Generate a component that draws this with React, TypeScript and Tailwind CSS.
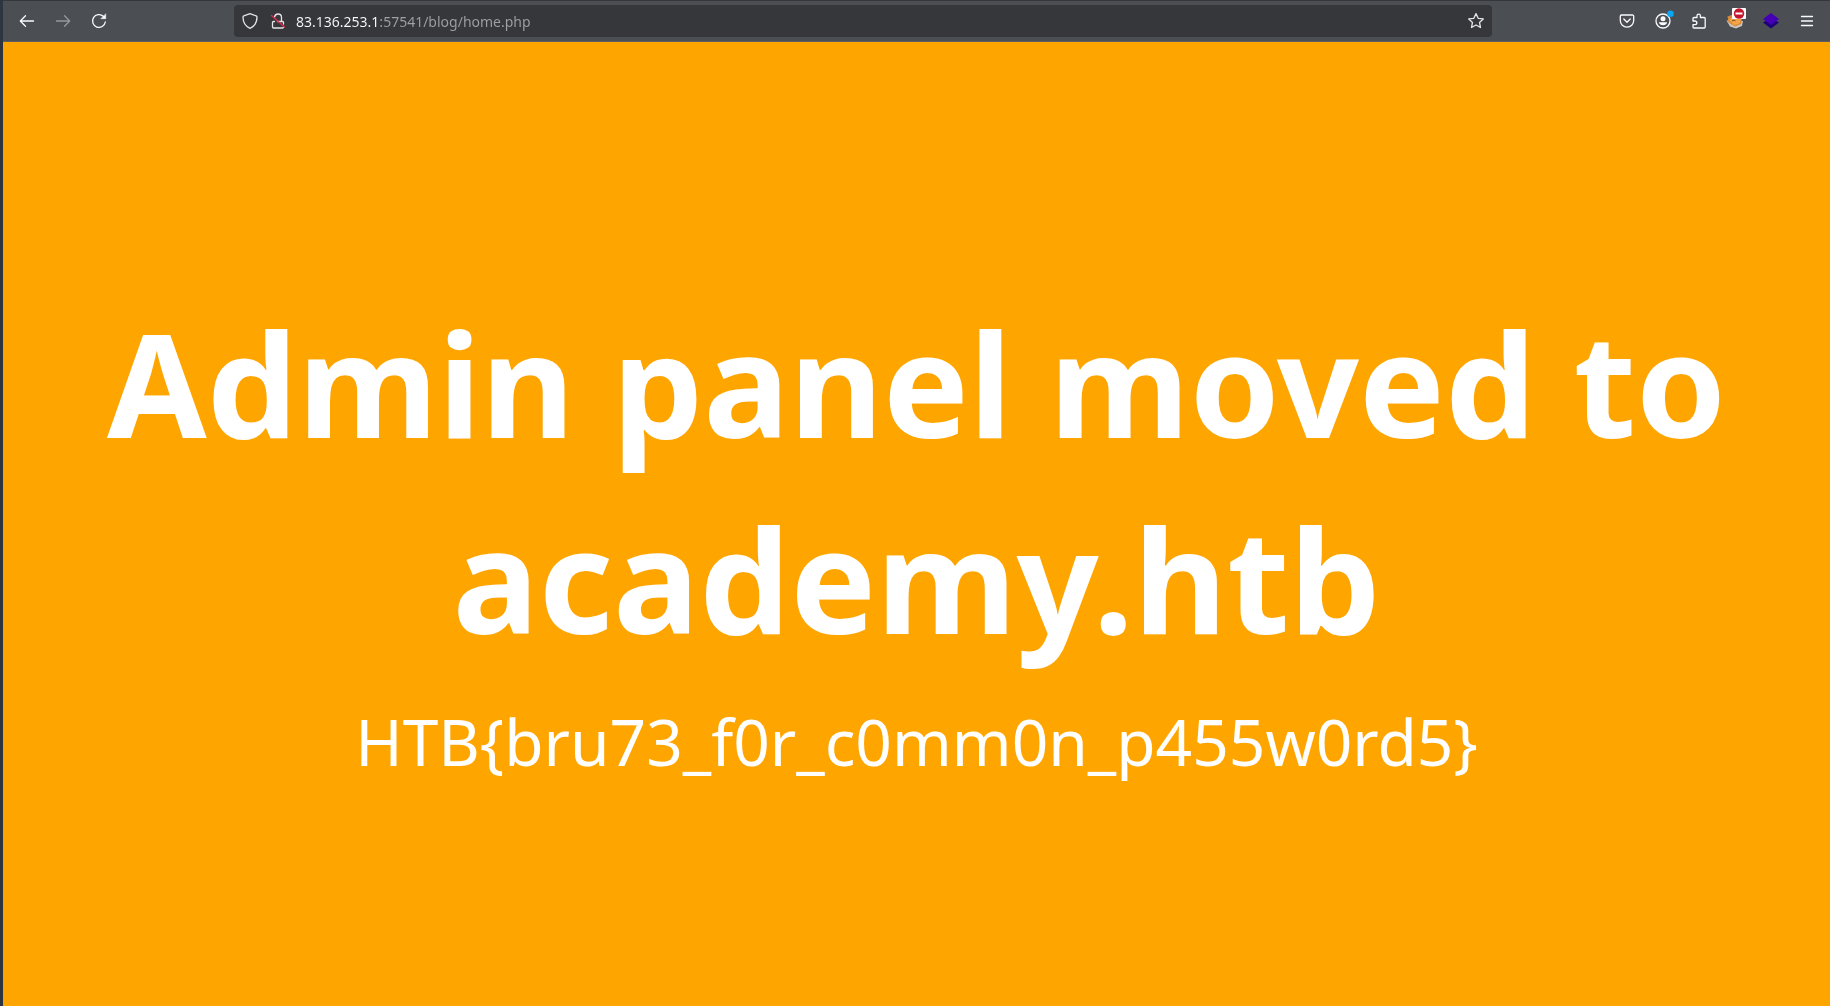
import type { ReactNode } from "react";

function ToolbarButton({ label, disabled, children }: { label: string; disabled?: boolean; children: ReactNode }) {
  return (
    <button
      type="button"
      aria-label={label}
      title={label}
      disabled={disabled}
      className="flex h-8 w-9 shrink-0 items-center justify-center rounded text-[#fbfbfe] disabled:text-[#96989b]"
    >
      {children}
    </button>
  );
}

function Glyph({ children }: { children: ReactNode }) {
  return (
    <svg
      viewBox="0 0 16 16"
      className="size-4 overflow-visible"
      fill="none"
      stroke="currentColor"
      strokeWidth="1.3"
      strokeLinecap="round"
      strokeLinejoin="round"
      aria-hidden="true"
    >
      {children}
    </svg>
  );
}

function AddressBar() {
  return (
    <div className="flex h-8 min-w-0 flex-[1252] items-center rounded bg-[#36373b] px-2 text-[#e4e4e6]">
      <button type="button" aria-label="Tracking protection" className="flex shrink-0">
        <Glyph>
          <path d="M8 .7 14.2 2.9c.5.2.8.6.8 1.1C15 9.200 12.400 13.300 8 15.300 3.600 13.300 1 9.200 1 4c0-.5.3-.9.8-1.100z" />
        </Glyph>
      </button>
      <button type="button" aria-label="Connection is not secure" className="ml-3 flex shrink-0">
        <Glyph>
          <path d="M4.500 4.200C4.800 2.200 6.200 1 8 1c2 0 3.500 1.500 3.500 3.500V8M4.500 8.500H3.500a1 1 0 0 0-1 1V14a1 1 0 0 0 1 1h9a1 1 0 0 0 1-1M7.500 8.500h5a1 1 0 0 1 1 1v1.500" />
          <path d="m1.500 2.500 13 11.500" stroke="#e22850" />
        </Glyph>
      </button>
      <input
        type="text"
        aria-label="Address"
        defaultValue="83.136.253.1:57541/blog/home.php"
        className="ml-[10px] min-w-0 flex-1 bg-[linear-gradient(90deg,#fbfbfe_83px,#a0a0a3_83px)] bg-clip-text pt-0.5 text-sm leading-5 text-transparent caret-white outline-none"
      />
      <button type="button" aria-label="Bookmark this page" className="flex shrink-0">
        <Glyph>
          <path d="m8 .6 2.200 4.700 5.100.6-3.800 3.500 1 5.100L8 12l-4.500 2.500 1-5.100L.7 5.900l5.100-.6z" />
        </Glyph>
      </button>
    </div>
  );
}

function Toolbar() {
  return (
    <header className="flex h-[42px] shrink-0 items-center border-t border-b border-t-[#35373c] border-b-[#5b5d61] bg-[#4b4e53] pr-[5px] pl-[6px]">
      <ToolbarButton label="Back">
        <Glyph>
          <path d="M14.500 8H1.500M6.500 2.800 1.300 8l5.200 5.200" />
        </Glyph>
      </ToolbarButton>
      <ToolbarButton label="Forward" disabled>
        <Glyph>
          <path d="M1.500 8h13M9.500 2.800 14.700 8l-5.200 5.200" />
        </Glyph>
      </ToolbarButton>
      <ToolbarButton label="Reload">
        <Glyph>
          <path d="M14.300 9A6.400 6.400 0 1 1 12.300 3.300" />
          <path d="M14.700 1.200v4.500h-4.500z" fill="currentColor" strokeWidth=".6" />
        </Glyph>
      </ToolbarButton>
      <div className="flex-[118]" />
      <AddressBar />
      <div className="flex-[118]" />
      <ToolbarButton label="Save to Pocket">
        <Glyph>
          <path d="M2.500 2h11a1.200 1.200 0 0 1 1.200 1.200V7.500a6.700 6.700 0 0 1-13.400 0V3.200A1.200 1.200 0 0 1 2.500 2z" />
          <path d="M4.800 6 8 9.200 11.200 6" />
        </Glyph>
      </ToolbarButton>
      <ToolbarButton label="Account">
        <Glyph>
          <circle cx="8" cy="8" r="7" />
          <circle cx="8" cy="5.700" r="2.500" fill="currentColor" stroke="none" />
          <path d="M3.800 9.200h8.400a4.300 3.800 0 0 1-8.400 0z" fill="currentColor" stroke="none" />
          <circle cx="15.500" cy=".8" r="3.300" fill="#0aa5f5" stroke="none" />
        </Glyph>
      </ToolbarButton>
      <ToolbarButton label="Extensions">
        <Glyph>
          <path d="M2 7V5.500a1 1 0 0 1 1-1h3V2.800a1.700 1.700 0 0 1 3.400 0v1.700h3.800a1 1 0 0 1 1 1V14a1 1 0 0 1-1 1H3a1 1 0 0 1-1-1v-2.300h2A1.800 1.800 0 0 0 4 8H2z" />
        </Glyph>
      </ToolbarButton>
      <ToolbarButton label="Blocked cookies extension">
        <svg viewBox="0 0 20 20" className="size-5 overflow-visible" aria-hidden="true">
          <path d="M1.500 9.500 5 15.500l6 2 6-2.500 1-5z" fill="#c9c4bc" />
          <path d="M2.500 5.500 8 3.500l9 3.500-1 6-6 2.500-6.500-4z" fill="#d98a36" />
          <path d="M4 8.500 8.500 5.500l7.500 2.500-1.500 4.500-5.500 1.500z" fill="#f7a548" />
          <path d="m7 10 2-1 1.500 1" stroke="#774720" strokeWidth="1" fill="none" />
          <rect x="7" y="-3" width="14" height="11" rx="1" fill="#fff" />
          <circle cx="14" cy="2.500" r="5.200" fill="#c5162e" />
          <path d="M10.500 2.500h7" stroke="#fff" strokeWidth="2" />
        </svg>
      </ToolbarButton>
      <ToolbarButton label="Layers extension">
        <svg viewBox="0 0 16 16" className="size-4 overflow-visible" aria-hidden="true">
          <path d="M0 9.500 8 5l8 4.500-8 6z" fill="#1c0078" />
          <path d="M0 6 8 0l8 6-8 6z" fill="#4500b5" />
        </svg>
      </ToolbarButton>
      <ToolbarButton label="Open application menu">
        <Glyph>
          <path d="M2.500 3.500h11M2.500 8h11M2.500 12.500h11" />
        </Glyph>
      </ToolbarButton>
    </header>
  );
}

export default function App() {
  return (
    <div className="flex min-h-screen flex-col border-l-[3px] border-[#2f353f] bg-[#ffa500] font-['Noto_Sans',sans-serif]">
      <Toolbar />
      <main className="flex flex-1 flex-col items-center justify-center pt-5 text-center text-white">
        <h1 className="text-[144px] leading-[196px] font-bold">Admin panel moved to academy.htb</h1>
        <p className="mt-[22px] text-[64px] leading-[87px]">{"HTB{bru73_f0r_c0mm0n_p455w0rd5}"}</p>
      </main>
    </div>
  );
}
